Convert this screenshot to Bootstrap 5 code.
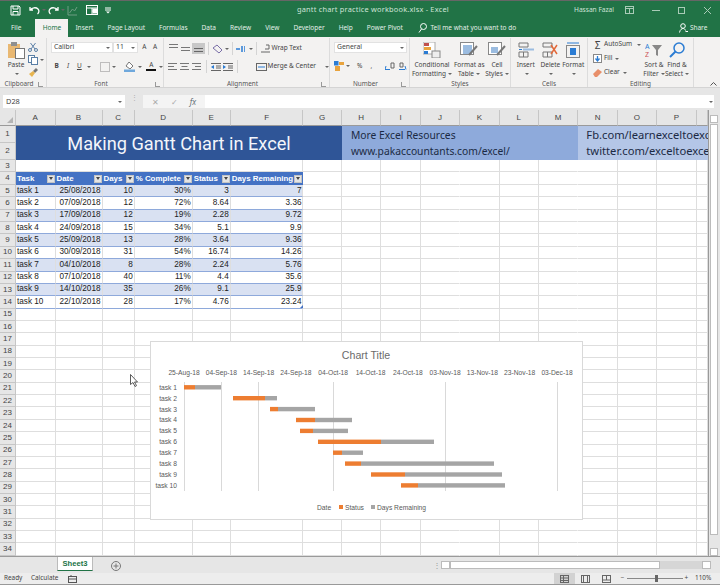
<!DOCTYPE html>
<html lang="en">
<head>
<meta charset="UTF-8">
<title>gantt chart practice workbook.xlsx - Excel</title>
<link href="https://cdn.jsdelivr.net/npm/bootstrap@5.3.0/dist/css/bootstrap.min.css" rel="stylesheet">
<style>
html, body { margin: 0; background: #e6e6e6; }
.xl-app { width: 720px; height: 585px; overflow: hidden; font-family: "Noto Sans", sans-serif; font-size: 6.5px; color: #444; line-height: 1; }
svg { display: block; flex: none; }

/* title bar */
.xl-title { height: 19px; background: #217346; border-top: 1px solid #666; color: #cfe3d7; padding-left: 10px; font-size: 7.4px; }
.qat { width: 287px; gap: 0; }
.qat-ic { width: 19px; }
.qat-sm { width: 8px; }
.xl-doc { width: 277px; letter-spacing: .2px; }
.xl-user { width: 43px; font-size: 6.6px; }
.win-btn { width: 25.75px; }

/* tabs */
.xl-tabs { height: 18px; background: #217346; padding-left: 4px; }
.xl-tabs .nav-link { color: #e4efe8; padding: 0 7px; font-size: 6.5px; height: 18px; line-height: 18px; white-space: nowrap; }
.xl-tabs .nav-link.active { background: #f3f2f1; color: #217346; width: 33px; padding: 0; text-align: center; margin: 0 0 0 7px; }
.xl-tell { margin-left: 8.5px; width: 260.5px; gap: 3px; color: #e4efe8; font-size: 6.5px; }
.xl-share { gap: 2px; color: #e4efe8; font-size: 6.5px; }

/* ribbon */
.xl-ribbon { height: 51px; background: #f3f2f1; border-bottom: 1px solid #d4d4d4; }
.rb-grp { border-right: 1px solid #dcdcdc; height: 49px; margin-top: 1px; padding-top: 4px; position: relative; }
.rb-label { position: absolute; left: 0; right: 0; top: 43px; text-align: center; font-size: 6.4px; color: #555; }
.rb-launch { position: absolute; right: 3px; top: 44px; width: 5px; height: 5px; border-left: 1px solid #999; border-bottom: 1px solid #999; }
.g-clip { width: 47px; padding-left: 6px; }
.g-font { width: 117px; padding-left: 4px; }
.g-align { width: 166px; padding-left: 3px; }
.g-num { width: 80px; padding-left: 4px; }
.g-sty { width: 101px; }
.g-cell { width: 77px; }
.g-edit { width: 106px; padding-left: 4px; }
.rb-paste { width: 20px; }
.rb-paste-txt { margin-top: 3px; }
.rb-small { margin-left: 2px; padding-top: 1px; gap: 3px; }
.rb-row2 { margin-top: 8px; }
.rb-row2-a { margin-top: 5px; }
.rb-box { height: 11px; background: #fff; border: 1px solid #e2e2e2; padding: 0 2px; font-size: 6.8px; }
.box-font { width: 62px; }
.box-size { width: 25px; }
.box-gen { width: 73px; }
.rb-c12 { width: 12.5px; }
.rb-c9 { width: 9px; }
.rb-sep { width: 1px; height: 13px; background: #d4d4d4; margin: 0 3px; }
.rb-sep-far { margin-right: 18px; }
.rb-big { font-size: 6.5px; line-height: 9px; text-align: center; white-space: nowrap; }
.rb-big svg { margin-bottom: 2px; }
.big-cond { width: 44px; }
.big-fmt { width: 30px; }
.big-cellst { width: 26px; }
.big-ins { width: 30px; }
.big-del { width: 19px; }
.big-form { width: 28px; }
.big-sort { width: 22px; }
.big-find { width: 24px; }
.rb-caret { display: inline-block; width: 0; height: 0; border: 2px solid transparent; border-top: 2.5px solid #666; border-bottom: 0; vertical-align: middle; margin-left: 2px; flex: none; }
.rb-sel { background: #c8c8c8; }
.rb-stack { width: 51px; gap: 3px; margin-top: -3px; }
.rb-line { gap: 1px; height: 11px; white-space: nowrap; }
.rb-lic { width: 11px; display: flex; justify-content: center; flex: none; }
.rb-sum { font-size: 10px; }
.rb-pin { width: 10px; margin-left: auto; padding: 45px 0 0 0; }

/* formula bar */
.xl-fbar { height: 22px; background: #e6e6e6; padding: 7px 6px 2px 3px; }
.fb-name { width: 122px; background: #fff; height: 13px; padding: 0 3px; font-size: 7.4px; }
.fb-dots { width: 18px; color: #aaa; }
.fb-btns { width: 62px; height: 13px; background: #f4f4f4; color: #aaa; font-size: 8px; justify-content: space-around; padding: 0 3px; }
.fb-input { flex: 1; height: 13px; background: #fff; padding-right: 1px; }

/* sheet */
.xl-body { height: 446px; position: relative; background: #fff; }
.xl-grid { width: 708px; display: grid; grid-template-columns: 16px 39.5px 47px 32.2px 58px 38px 72.8px 38.5px repeat(9, 39.4px) 11.4px; grid-template-rows: 16px 17px 17px 12px 13px repeat(30, 12.37px); font-family: "Liberation Sans", sans-serif; overflow: hidden; }
.xc { border-right: 1px solid #dedede; border-bottom: 1px solid #dedede; overflow: hidden; white-space: nowrap; font-size: 8.2px; color: #222; display: flex; align-items: center; padding: 0 1px; }
.xc-end { justify-content: flex-end; }
.xc-noline { border-right-color: transparent; }
.xh { background: #e6e6e6; border-color: #c6c6c6; justify-content: center; color: #444; font-size: 8px; padding: 0; }
.xh-col { border-bottom-color: #9a9a9a; }
.xh-corner { position: relative; }
.xh-corner::after { content: ""; position: absolute; right: 2px; bottom: 2px; border-left: 6px solid transparent; border-bottom: 6px solid #b4b4b4; }
.xt-title { grid-column: 2 / span 7; grid-row: 2 / span 2; background: #2f5597; color: #f4f6fb; font: 18.2px Roboto, sans-serif; justify-content: center; border: 0; }
.xt-res, .xt-soc { grid-row: 2 / span 2; display: block; border: 0; font: 10.3px/16px "Noto Sans", sans-serif; color: #1c2a44; padding: 1px 0 0 9px; }
.xt-res { grid-column: 9 / span 6; background: #8eaadb; }
.xt-soc { grid-column: 15 / span 4; background: #b4c6e7; padding-left: 8px; font-size: 11.2px; }
.xr-head { background: #4472c4; color: #fff; font-weight: 700; font-size: 7.9px; justify-content: space-between; border: 0; padding-right: 1px; }
.xr-band { background: #d9e1f2; }
.xr-edge { border-bottom-color: #8ea9db; }
.xf-btn { width: 8px; height: 8px; background: #e4e4e4; border: 1px solid #c4c4c4; display: flex; align-items: center; justify-content: center; flex: none; margin-left: 1px; }
.xf-btn::after { content: ""; border: 2px solid transparent; border-top: 3px solid #444; border-bottom: 0; }
.xl-handle { position: absolute; left: 300px; top: 195px; border-left: 3px solid transparent; border-bottom: 3px solid #4472c4; }

/* chart */
.xl-chart { position: absolute; left: 150px; top: 231px; width: 433px; height: 179px; background: #fff; border: 1px solid #d9d9d9; }
.xl-chart text { font-family: "Liberation Sans", sans-serif; font-size: 6.7px; fill: #595959; }
.xl-chart .ch-title { font-size: 10.6px; fill: #6b6b6b; }
.xl-cursor { position: absolute; left: 130px; top: 264px; }

/* vertical scrollbar */
.xl-vs { position: absolute; left: 708px; top: 0; width: 12px; height: 446px; background: #e6e6e6; border-left: 1px solid #9a9a9a; padding: 5px 2px 0 1px; }
.vs-btn { height: 8px; background: #fff; border: 1px solid #bbb; }
.vs-thumb { height: 411px; background: #fff; border: 1px solid #bbb; margin: 1px 0 13px; }

/* sheet tabs and status */
.xl-tabsbar { height: 17px; background: #e6e6e6; border-top: 1px solid #9a9a9a; }
.st-tab { margin-left: 57px; width: 36px; height: 14px; background: #fff; color: #217346; font: 700 7.6px "Liberation Sans", sans-serif; text-align: center; line-height: 13px; border-bottom: 1px solid #217346; border-left: 1px solid #bbb; border-right: 1px solid #bbb; }
.st-add { margin-left: 18px; width: 322px; }
.st-dots { width: 8px; color: #999; font-size: 8px; }
.hs-btn { width: 9px; height: 8px; background: #fff; border: 1px solid #bbb; }
.hs-thumb { width: 210px; height: 8px; background: #fff; border: 1px solid #bbb; }
.hs-track { width: 42px; height: 8px; background: #d6d6d6; }
.xl-status { height: 12px; background: #ededed; border-bottom: 1px solid #999; padding: 0 10px 0 4px; font-size: 6.4px; }
.sb-ready { width: 27px; }
.sb-calc { width: 37px; }
.sb-rest { margin-left: auto; }
.sb-view { width: 21px; height: 11px; }
.sb-view-on { background: #d2d2d2; }
.sb-zoom { width: 71px; margin-left: 2px; gap: 2px; }
.sb-pct { width: 15px; margin-left: 5px; }
.sb-track { width: 56px; height: 1px; background: #888; position: relative; }
.sb-track::after { content: ""; position: absolute; left: 28px; top: -3px; width: 3px; height: 7px; background: #666; }
</style>
</head>
<body>
<div class="xl-app d-flex flex-column">

  <div class="xl-title d-flex align-items-center">
    <div class="qat d-flex align-items-center">
      <div class="qat-ic"><svg width="11" height="11" viewBox="0 0 11 11" fill="none" stroke="#fff"><path d="M1 1h8l1 1v8H1z"/><path d="M3 1v3h5V1M3 10V6.500h5V10"/></svg></div>
      <div class="qat-ic d-flex align-items-center"><svg width="11" height="9" viewBox="0 0 11 9" fill="none" stroke="#fff" stroke-width="1.3"><path d="M1 1v3h3M1.300 4C3 1.500 7 1 9 3c1.500 1.500 1 4-.5 5"/></svg><span class="rb-caret"></span></div>
      <div class="qat-ic d-flex align-items-center"><svg width="11" height="9" viewBox="0 0 11 9" fill="none" stroke="#fff" stroke-width="1.3"><path d="M10 1v3H7M9.700 4C8 1.500 4 1 2 3 .5 4.500 1 7 2.500 8"/></svg><span class="rb-caret"></span></div>
      <div class="qat-ic"><svg width="11" height="11" viewBox="0 0 11 11" fill="none" stroke="#6f9e83"><path d="M1 1v9h9M2.500 8l3-4 2 2L10 2"/></svg></div>
      <div class="qat-ic"><svg width="12" height="10" viewBox="0 0 12 10" fill="none" stroke="#fff"><rect x=".5" y=".5" width="11" height="9"/><path d="M.5 3h11M6 3v6.500M6 6h5.500" /><rect x="7" y="4" width="4" height="4" fill="#fff"/></svg></div>
      <div class="qat-sm"><svg width="6" height="7" viewBox="0 0 6 7"><path d="M0 1h6M0 3h6" stroke="#fff"/><path d="M1 4.500h4l-2 2z" fill="#fff"/></svg></div>
    </div>
    <div class="xl-doc">gantt chart practice workbook.xlsx - Excel</div>
    <div class="xl-user">Hassan Fazal</div>
    <div class="win-btn d-flex justify-content-center"><svg width="9" height="8" viewBox="0 0 9 8" fill="none" stroke="#a9cbb7"><rect x=".5" y=".5" width="8" height="7"/><path d="M.5 2.500h8M4.500 2.500v5"/></svg></div>
    <div class="win-btn d-flex justify-content-center"><svg width="8" height="1"><rect width="8" height="1" fill="#a9cbb7"/></svg></div>
    <div class="win-btn d-flex justify-content-center"><svg width="7" height="7" viewBox="0 0 7 7" fill="none" stroke="#a9cbb7"><rect x=".5" y=".5" width="6" height="6"/></svg></div>
    <div class="win-btn d-flex justify-content-center"><svg width="7" height="7" viewBox="0 0 7 7" stroke="#a9cbb7"><path d="M0 0l7 7M7 0L0 7"/></svg></div>
  </div>

  <div class="xl-tabs d-flex align-items-center">
    <ul class="nav flex-nowrap">
      <li class="nav-item"><a class="nav-link" href="#">File</a></li>
      <li class="nav-item"><a class="nav-link active" href="#">Home</a></li>
      <li class="nav-item"><a class="nav-link" href="#">Insert</a></li>
      <li class="nav-item"><a class="nav-link" href="#">Page Layout</a></li>
      <li class="nav-item"><a class="nav-link" href="#">Formulas</a></li>
      <li class="nav-item"><a class="nav-link" href="#">Data</a></li>
      <li class="nav-item"><a class="nav-link" href="#">Review</a></li>
      <li class="nav-item"><a class="nav-link" href="#">View</a></li>
      <li class="nav-item"><a class="nav-link" href="#">Developer</a></li>
      <li class="nav-item"><a class="nav-link" href="#">Help</a></li>
      <li class="nav-item"><a class="nav-link" href="#">Power Pivot</a></li>
    </ul>
    <div class="xl-tell d-flex align-items-center">
      <svg width="9" height="10" viewBox="0 0 9 10" fill="none" stroke="#fff"><circle cx="5.500" cy="3.500" r="3"/><path d="M3.500 6L1 9.500"/></svg>
      <span>Tell me what you want to do</span>
    </div>
    <div class="xl-share d-flex align-items-center">
      <svg width="9" height="10" viewBox="0 0 9 10" fill="none" stroke="#fff"><circle cx="4" cy="3" r="2.300"/><path d="M.5 9.500C1 6.500 3 5.500 4 5.500s2 .5 2.500 2M6.500 8.500h2.500"/></svg>
      <span>Share</span>
    </div>
  </div>

  <div class="xl-ribbon d-flex">
    <div class="rb-grp g-clip d-flex">
      <div class="rb-paste d-flex flex-column align-items-center">
        <svg width="17" height="17" viewBox="0 0 17 17"><rect x="0" y="2" width="12" height="14" fill="#e9b872"/><rect x="3" y="0" width="6" height="4" fill="#8f8f8f"/><rect x="7.500" y="6.500" width="9" height="10" fill="#fff" stroke="#777"/></svg>
        <div class="rb-paste-txt">Paste</div>
        <span class="rb-caret mt-1"></span>
      </div>
      <div class="rb-small d-flex flex-column">
        <svg width="10" height="9" viewBox="0 0 10 9" fill="none" stroke="#5a7fa6"><circle cx="2" cy="7" r="1.500"/><circle cx="8" cy="7" r="1.500"/><path d="M3 6L7.500 0M7 6L2.500 0"/></svg>
        <div class="d-flex align-items-center"><svg width="10" height="10" viewBox="0 0 10 10" fill="#fff" stroke="#5a7fa6"><rect x=".5" y=".5" width="6" height="7"/><rect x="3.500" y="2.500" width="6" height="7"/></svg><span class="rb-caret"></span></div>
        <svg width="10" height="9" viewBox="0 0 10 9"><path d="M5 3l3-3 2 2-3 3z" fill="#777"/><path d="M1 6l4-3 2 2-3 4z" fill="#e7b44f"/></svg>
      </div>
      <div class="rb-label pe-2">Clipboard</div><span class="rb-launch"></span>
    </div>

    <div class="rb-grp g-font">
      <div class="d-flex align-items-center">
        <div class="rb-box box-font d-flex align-items-center justify-content-between">Calibri<span class="rb-caret"></span></div>
        <div class="rb-box box-size d-flex align-items-center justify-content-between">11<span class="rb-caret"></span></div>
        <div class="rb-c12 text-center">A</div>
        <div class="rb-c9 text-center">A</div>
      </div>
      <div class="rb-row2 d-flex align-items-center">
        <div class="rb-c12 text-center fw-bold">B</div>
        <div class="rb-c12 text-center fst-italic">I</div>
        <div class="rb-c12 text-center text-decoration-underline">U</div>
        <span class="rb-caret"></span>
        <div class="rb-c12 ms-2 d-flex justify-content-center"><svg width="10" height="10" viewBox="0 0 10 10" fill="none" stroke="#888" stroke-dasharray="1 1"><rect x=".5" y=".5" width="9" height="9"/></svg></div>
        <span class="rb-caret"></span>
        <div class="rb-c12 ms-2 d-flex justify-content-center"><svg width="11" height="11" viewBox="0 0 11 11"><path d="M2 5l3-4 4 4-3 3z" fill="#fff" stroke="#777"/><rect y="8.500" width="11" height="2.500" fill="#6fa8dc"/></svg></div>
        <span class="rb-caret"></span>
        <div class="rb-c12 ms-1 d-flex flex-column align-items-center"><span>A</span><svg width="10" height="2"><rect width="10" height="2" fill="#111"/></svg></div>
        <span class="rb-caret"></span>
      </div>
      <div class="rb-label pe-2">Font</div><span class="rb-launch"></span>
    </div>

    <div class="rb-grp g-align">
      <div class="d-flex align-items-center">
        <div class="rb-c12 d-flex justify-content-center"><svg width="9" height="11" viewBox="0 0 9 11" stroke="#777"><path d="M0 1.500h9M0 4.500h9"/></svg></div>
        <div class="rb-c12 d-flex justify-content-center"><svg width="9" height="11" viewBox="0 0 9 11" stroke="#777"><path d="M0 4.500h9M0 7.500h9"/></svg></div>
        <div class="rb-c12 d-flex justify-content-center rb-sel"><svg width="9" height="11" viewBox="0 0 9 11" stroke="#666"><path d="M0 5.500h9M0 8.500h9"/></svg></div>
        <div class="rb-sep"></div>
        <svg width="11" height="10" viewBox="0 0 11 10" fill="none" stroke="#7a6fa8"><path d="M1 4l4-3 5 5-3 3z"/></svg><span class="rb-caret"></span>
        <div class="rb-sep"></div>
        <svg width="9" height="8" viewBox="0 0 9 8"><path d="M0 4h4M9 1v6M6 1v6" stroke="#2b7cd3" stroke-width="1.500"/></svg><span class="rb-caret ms-1"></span>
        <div class="rb-sep"></div>
        <div class="rb-line d-flex align-items-center"><svg width="11" height="11" viewBox="0 0 11 11" fill="none" stroke="#666"><path d="M1 9h9M6 2h3v4H5"/></svg><span>Wrap Text</span></div>
      </div>
      <div class="rb-row2-a d-flex align-items-center">
        <div class="rb-c12 d-flex justify-content-center"><svg width="9" height="7" viewBox="0 0 9 7" stroke="#777"><path d="M0 .5h9M0 3.500h6M0 6.500h9"/></svg></div>
        <div class="rb-c12 d-flex justify-content-center"><svg width="9" height="7" viewBox="0 0 9 7" stroke="#777"><path d="M0 .5h9M1.500 3.500h6M0 6.500h9"/></svg></div>
        <div class="rb-c12 d-flex justify-content-center"><svg width="9" height="7" viewBox="0 0 9 7" stroke="#777"><path d="M0 .5h9M3 3.500h6M0 6.500h9"/></svg></div>
        <div class="rb-sep"></div>
        <div class="rb-c12 d-flex justify-content-center"><svg width="10" height="8" viewBox="0 0 10 8" stroke="#666"><path d="M0 .5h10M5 3h5M5 5h5M0 7.500h10"/><path d="M3 2v4L0 4z" fill="#2b7cd3" stroke="none"/></svg></div>
        <div class="rb-c12 d-flex justify-content-center"><svg width="10" height="8" viewBox="0 0 10 8" stroke="#666"><path d="M0 .5h10M5 3h5M5 5h5M0 7.500h10"/><path d="M0 2v4l3-2z" fill="#2b7cd3" stroke="none"/></svg></div>
        <div class="rb-sep rb-sep-far"></div>
        <div class="rb-line d-flex align-items-center"><svg width="11" height="8" viewBox="0 0 11 8" fill="none" stroke="#666"><rect x=".5" y=".5" width="10" height="7"/><path d="M2 4h7" stroke="#2b7cd3"/></svg><span>Merge &amp; Center</span><span class="rb-caret ms-2"></span></div>
      </div>
      <div class="rb-label pe-2">Alignment</div><span class="rb-launch"></span>
    </div>

    <div class="rb-grp g-num">
      <div class="rb-box box-gen d-flex align-items-center justify-content-between">General<span class="rb-caret"></span></div>
      <div class="rb-row2 d-flex align-items-center">
        <svg width="10" height="10" viewBox="0 0 10 10"><rect width="4.500" height="4.500" fill="#2b7cd3"/><rect x="5" y="1" width="5" height="3" fill="#e8a33d"/><rect y="5" x="1" width="5" height="5" fill="#e8a33d"/></svg><span class="rb-caret"></span>
        <div class="rb-c12 text-center ms-1">%</div>
        <div class="rb-c12 text-center">,</div>
        <div class="rb-c12 text-center ms-2 pe-1"><svg width="10" height="8" viewBox="0 0 10 8" stroke="#2b7cd3"><path d="M0 7.500h5M1 4l-1 3.500"/><path d="M6 1h3v5H6z" fill="none" stroke="#666"/></svg></div>
        <div class="rb-c12 text-center"><svg width="10" height="8" viewBox="0 0 10 8" stroke="#2b7cd3"><path d="M1 7.500h6M7 4l1 3.500"/><path d="M2 1h3v4H2z" fill="none" stroke="#666"/></svg></div>
      </div>
      <div class="rb-label pe-2">Number</div><span class="rb-launch"></span>
    </div>

    <div class="rb-grp g-sty d-flex">
      <div class="rb-big big-cond">
        <svg class="mx-auto" width="18" height="16" viewBox="0 0 18 16"><rect width="12" height="12" fill="#fff" stroke="#aaa"/><rect x="1" y="1" width="5" height="3" fill="#c0504d"/><rect x="1" y="5" width="7" height="3" fill="#e8a33d"/><rect x="1" y="9" width="4" height="3" fill="#2b7cd3"/><rect x="9" y="9" width="8" height="7" fill="#eee" stroke="#888"/></svg>
        Conditional<br>Formatting<span class="rb-caret"></span>
      </div>
      <div class="rb-big big-fmt">
        <svg class="mx-auto" width="18" height="16" viewBox="0 0 18 16"><rect x=".5" y=".5" width="13" height="12" fill="#fff" stroke="#888"/><rect x="3" y="3" width="9" height="9" fill="#9bbce0"/><path d="M17 4l-8 9" stroke="#777" stroke-width="2"/></svg>
        Format as<br>Table<span class="rb-caret"></span>
      </div>
      <div class="rb-big big-cellst">
        <svg class="mx-auto" width="18" height="16" viewBox="0 0 18 16"><rect x=".5" y=".5" width="13" height="12" fill="#fff" stroke="#888"/><rect x="3" y="5" width="7" height="6" fill="#9bbce0"/><path d="M17 4l-8 9" stroke="#777" stroke-width="2"/></svg>
        Cell<br>Styles<span class="rb-caret"></span>
      </div>
      <div class="rb-label">Styles</div>
    </div>

    <div class="rb-grp g-cell d-flex">
      <div class="rb-big big-ins">
        <svg class="mx-auto" width="16" height="16" viewBox="0 0 16 16" fill="none" stroke="#777"><path d="M1 1h9v4H1zM1 10h9v5H1zM5.500 10v5"/><path d="M5 7.500h11" stroke="#9bbce0" stroke-width="2"/><path d="M1 7.500h3" stroke="#2b7cd3"/></svg>
        Insert<br><span class="rb-caret"></span>
      </div>
      <div class="rb-big big-del">
        <svg class="mx-auto" width="16" height="16" viewBox="0 0 16 16" fill="none" stroke="#777"><path d="M1 1h9v4H1zM1 10h9v5H1zM5.500 10v5"/><path d="M9 3l6 9M15 3l-6 9" stroke="#e2693a" stroke-width="1.500"/></svg>
        Delete<br><span class="rb-caret"></span>
      </div>
      <div class="rb-big big-form">
        <svg class="mx-auto" width="16" height="16" viewBox="0 0 16 16" fill="none" stroke="#888"><rect x="1.500" y="3.500" width="13" height="12"/><rect x="5" y="6" width="6" height="7" fill="#2b7cd3" stroke="none"/><path d="M2 1h12" stroke="#2b7cd3"/></svg>
        Format<br><span class="rb-caret"></span>
      </div>
      <div class="rb-label">Cells</div>
    </div>

    <div class="rb-grp g-edit d-flex">
      <div class="rb-stack d-flex flex-column">
        <div class="rb-line d-flex align-items-center"><span class="rb-lic rb-sum">&Sigma;</span><span>AutoSum</span><span class="rb-caret ms-1"></span></div>
        <div class="rb-line d-flex align-items-center"><span class="rb-lic"><svg width="9" height="9" viewBox="0 0 9 9"><rect x=".5" y=".5" width="8" height="8" fill="#fff" stroke="#888"/><path d="M4.500 2v4M2.500 4.500l2 2.500 2-2.500" fill="none" stroke="#2b7cd3" stroke-width="1.300"/></svg></span><span>Fill</span><span class="rb-caret"></span></div>
        <div class="rb-line d-flex align-items-center"><span class="rb-lic"><svg width="9" height="8" viewBox="0 0 9 8"><path d="M0 5l5-5 4 3-5 5H2z" fill="#e88f6a"/></svg></span><span>Clear</span><span class="rb-caret"></span></div>
      </div>
      <div class="rb-big big-sort">
        <svg class="mx-auto" width="18" height="16" viewBox="0 0 18 16"><text x="0" y="7" font-size="7" fill="#2b7cd3">A</text><text x="0" y="15" font-size="7" fill="#c55">Z</text><path d="M7 3h10l-4 5v6l-2-1V8z" fill="#888"/></svg>
        Sort &amp;<br>Filter<span class="rb-caret"></span>
      </div>
      <div class="rb-big big-find">
        <svg class="mx-auto" width="16" height="16" viewBox="0 0 16 16" fill="none" stroke="#2b7cd3" stroke-width="1.500"><circle cx="10" cy="6" r="5"/><path d="M6.500 9.500L1 15" stroke-width="2"/></svg>
        Find &amp;<br>Select<span class="rb-caret"></span>
      </div>
      <div class="rb-label">Editing</div>
    </div>
    <div class="rb-pin"><svg width="7" height="4" viewBox="0 0 7 4" fill="none" stroke="#555"><path d="M.5 3.500l3-3 3 3"/></svg></div>
  </div>

  <div class="xl-fbar d-flex align-items-start">
    <div class="fb-name d-flex align-items-center justify-content-between">D28<span class="rb-caret"></span></div>
    <div class="fb-dots text-center">&#8942;</div>
    <div class="fb-btns d-flex align-items-center"><span>&#10005;</span><span>&#10003;</span><span class="fst-italic text-secondary">fx</span></div>
    <div class="fb-input d-flex align-items-center justify-content-end"><span class="rb-caret"></span></div>
  </div>

  <div class="xl-body">
    <div class="xl-grid" id="sheet"></div>

    <div class="xl-chart" id="chart">
      <svg width="431" height="177" viewBox="151 342 431 177" id="chartsvg"></svg>
    </div>

    <svg class="xl-cursor" width="9" height="13" viewBox="0 0 9 13"><path d="M.5.5v10l2.500-2 2 4 1.500-.8-2-3.700h3z" fill="#fff" stroke="#333" stroke-width=".8"/></svg>
    <span class="xl-handle"></span>

    <div class="xl-vs">
      <div class="vs-btn"></div>
      <div class="vs-thumb"></div>
      <div class="vs-btn"></div>
    </div>
  </div>

  <div class="xl-tabsbar d-flex align-items-start">
    <div class="st-tab">Sheet3</div>
    <div class="st-add pt-1"><svg width="10" height="10" viewBox="0 0 10 10" fill="none" stroke="#777"><circle cx="5" cy="5" r="4.500"/><path d="M5 2.500v5M2.500 5h5"/></svg></div>
    <div class="st-dots text-center pt-1">&#8942;</div>
    <div class="d-flex align-items-center pt-1">
      <div class="hs-btn"></div>
      <div class="hs-thumb"></div>
      <div class="hs-track"></div>
      <div class="hs-btn"></div>
    </div>
  </div>

  <div class="xl-status d-flex align-items-center">
    <div class="sb-ready">Ready</div>
    <div class="sb-calc">Calculate</div>
    <svg width="9" height="9" viewBox="0 0 9 9" fill="none" stroke="#555"><rect x=".5" y="2.500" width="8" height="6"/><path d="M.5 5h8M3 1v2"/></svg>
    <div class="sb-rest d-flex align-items-center">
      <div class="sb-view sb-view-on d-flex align-items-center justify-content-center"><svg width="9" height="8" viewBox="0 0 9 8" fill="none" stroke="#666"><rect x=".5" y=".5" width="8" height="7"/><path d="M.5 3h8M.5 5.500h8M3.500.5v7"/></svg></div>
      <div class="sb-view d-flex align-items-center justify-content-center"><svg width="9" height="8" viewBox="0 0 9 8" fill="none" stroke="#666"><rect x=".5" y=".5" width="8" height="7"/><path d="M2.500.5v7h4v-7"/></svg></div>
      <div class="sb-view d-flex align-items-center justify-content-center"><svg width="9" height="8" viewBox="0 0 9 8" fill="none" stroke="#666"><rect x=".5" y=".5" width="8" height="7"/><path d="M.5 5h8M4.500.5V5"/></svg></div>
      <div class="sb-zoom d-flex align-items-center justify-content-center"><span>&minus;</span><div class="sb-track"></div><span>+</span></div>
      <div class="sb-pct">110%</div>
    </div>
  </div>
</div>

<script>
// sheet cells
var letters = "ABCDEFGHIJKLMNOP ".split("");
var tasks = [
  ["task 1","25/08/2018",10,"30%",3,7],
  ["task 2","07/09/2018",12,"72%",8.64,3.36],
  ["task 3","17/09/2018",12,"19%",2.28,9.72],
  ["task 4","24/09/2018",15,"34%",5.1,9.9],
  ["task 5","25/09/2018",13,"28%",3.64,9.36],
  ["task 6","30/09/2018",31,"54%",16.74,14.26],
  ["task 7","04/10/2018",8,"28%",2.24,5.76],
  ["task 8","07/10/2018",40,"11%",4.4,35.6],
  ["task 9","14/10/2018",35,"26%",9.1,25.9],
  ["task 10","22/10/2018",28,"17%",4.76,23.24]
];
var heads = ["Task","Date","Days","% Complete","Status","Days Remaining"];
var html = '<div class="xc xh xh-col xh-corner"></div>';
letters.forEach(function (c) { html += '<div class="xc xh xh-col">' + c + '</div>'; });

for (var r = 1; r <= 34; r++) {
  html += '<div class="xc xh">' + r + '</div>';
  if (r === 1) {
    html += '<div class="xc xt-title">Making Gantt Chart in Excel</div>';
    html += '<div class="xc xt-res">More Excel Resources<br>www.pakaccountants.com/excel/</div>';
    html += '<div class="xc xt-soc">Fb.com/learnexceltoexcel<br>twitter.com/exceltoexcel</div>';
    continue;
  }
  if (r === 2) continue;
  for (var c = 0; c < 17; c++) {
    var cls = "xc", txt = "";
    if (c === 9 || c === 12) cls += " xc-noline";
    if (r === 4 && c < 6) {
      cls += " xr-head";
      txt = '<span>' + heads[c] + '</span><span class="xf-btn"></span>';
    } else if (r >= 5 && r <= 14 && c < 6) {
      txt = tasks[r - 5][c];
      if (c > 0) cls += " xc-end";
      if (r % 2 === 1) cls += " xr-band";
      cls += " xr-edge";
    }
    html += '<div class="' + cls + '">' + txt + '</div>';
  }
}
document.getElementById("sheet").innerHTML = html;

// chart, in page coordinates
var bars = [
  [184,195,221],[233,265,277],[270,278,315],[296,315,352],[300,313,348],
  [318,381,434],[333,342,363],[345,361,494],[371,405,502],[401,418,505]
];
var ticks = ["25-Aug-18","04-Sep-18","14-Sep-18","24-Sep-18","04-Oct-18","14-Oct-18","24-Oct-18","03-Nov-18","13-Nov-18","23-Nov-18","03-Dec-18"];
var s = '<text class="ch-title" x="366" y="359" text-anchor="middle">Chart Title</text>';
ticks.forEach(function (t, i) {
  s += '<text x="' + (184 + i * 37.3) + '" y="375" text-anchor="middle">' + t + '</text>';
});
[184.5, 221.5, 258.5, 333.5, 445.5, 557.5].forEach(function (x) {
  s += '<path d="M' + x + ' 382V491" stroke="#d9d9d9"/>';
});
bars.forEach(function (b, i) {
  var y = 387.3 + i * 10.9;
  s += '<text x="177" y="' + (y + 2.4) + '" text-anchor="end">task ' + (i + 1) + '</text>';
  s += '<rect x="' + b[0] + '" y="' + (y - 2.2) + '" width="' + (b[1] - b[0]) + '" height="4.4" fill="#ed7d31"/>';
  s += '<rect x="' + b[1] + '" y="' + (y - 2.2) + '" width="' + (b[2] - b[1]) + '" height="4.4" fill="#a5a5a5"/>';
});
s += '<text x="317" y="510">Date</text>';
s += '<rect x="339" y="505" width="4" height="4" fill="#ed7d31"/><text x="345" y="510">Status</text>';
s += '<rect x="371" y="505" width="4" height="4" fill="#a5a5a5"/><text x="377" y="510">Days Remaining</text>';
document.getElementById("chartsvg").innerHTML = s;
</script>
<script src="https://cdn.jsdelivr.net/npm/bootstrap@5.3.0/dist/js/bootstrap.bundle.min.js"></script>
</body>
</html>
